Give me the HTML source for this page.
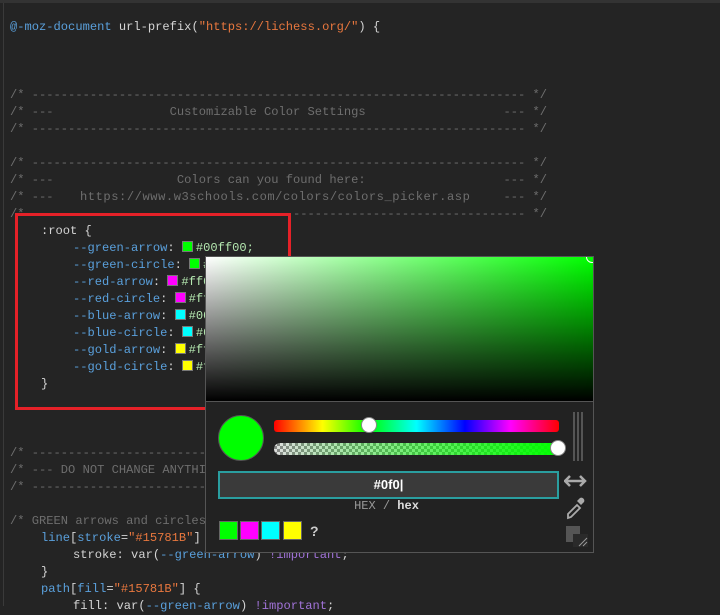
<!DOCTYPE html>
<html><head><style>
body{margin:0;width:720px;height:606px;background:#242424;overflow:hidden;position:relative;font-family:"Liberation Mono",monospace;font-size:12.1px;color:#d4d4d4}
.topb{position:absolute;left:0;top:0;width:720px;height:3px;background:#333}
.gut{position:absolute;left:3px;top:3px;width:1px;height:603px;background:#3a3a3a}
.l{position:absolute;white-space:pre;line-height:17px;height:17px}
.c{color:#6e6e6e}.k{color:#5aa0dc}.s{color:#e8773e}.v{color:#b5e8b0}.p{color:#a173d8}
.sw{display:inline-block;width:9px;height:9px;border:1px solid #777;vertical-align:-1px;margin-right:3px}
.box{position:absolute;left:15px;top:213px;width:270px;height:191px;border:3px solid #e52128}
.pk{position:absolute;left:205px;top:256px;width:387px;height:295px;background:#222;border:1px solid #555}
.grad{position:absolute;left:0;top:0;width:387px;height:144px;overflow:hidden;background:linear-gradient(to top,#000,rgba(0,0,0,0)),linear-gradient(to right,#fff,#0f0);border-bottom:1px solid #555}
</style></head><body>
<div class="topb"></div><div class="gut"></div>
<div class="l" style="left:10px;top:19px"><span class="k">@-moz-document</span> url-prefix(<span class="s">"https://lichess.org/"</span>) {</div>
<div class="l c" style="left:10px;top:87px">/* -------------------------------------------------------------------- */</div>
<div class="l c" style="left:10px;top:104px">/* ---                Customizable Color Settings                   --- */</div>
<div class="l c" style="left:10px;top:121px">/* -------------------------------------------------------------------- */</div>
<div class="l c" style="left:10px;top:155px">/* -------------------------------------------------------------------- */</div>
<div class="l c" style="left:10px;top:172px">/* ---                 Colors can you found here:                   --- */</div>
<div class="l c" style="left:10px;top:189px">/* ---                                                              --- */</div>
<div class="l c" style="left:80px;top:189px;letter-spacing:0.55px">https://www.w3schools.com/colors/colors_picker.asp</div>
<div class="l c" style="left:10px;top:206px">/* -------------------------------------------------------------------- */</div>
<div class="l" style="left:41px;top:223px">:root {</div>
<div class="l" style="left:73px;top:240px"><span class="k">--green-arrow</span>: <span class="sw" style="background:#0f0"></span><span class="v">#00ff00;</span></div>
<div class="l" style="left:73px;top:257px"><span class="k">--green-circle</span>: <span class="sw" style="background:#0f0"></span><span class="v">#00ff00;</span></div>
<div class="l" style="left:73px;top:274px"><span class="k">--red-arrow</span>: <span class="sw" style="background:#f0f"></span><span class="v">#ff00ff;</span></div>
<div class="l" style="left:73px;top:291px"><span class="k">--red-circle</span>: <span class="sw" style="background:#f0f"></span><span class="v">#ff00ff;</span></div>
<div class="l" style="left:73px;top:308px"><span class="k">--blue-arrow</span>: <span class="sw" style="background:#0ff"></span><span class="v">#00ffff;</span></div>
<div class="l" style="left:73px;top:325px"><span class="k">--blue-circle</span>: <span class="sw" style="background:#0ff"></span><span class="v">#00ffff;</span></div>
<div class="l" style="left:73px;top:342px"><span class="k">--gold-arrow</span>: <span class="sw" style="background:#ff0"></span><span class="v">#ffff00;</span></div>
<div class="l" style="left:73px;top:359px"><span class="k">--gold-circle</span>: <span class="sw" style="background:#ff0"></span><span class="v">#ffff00;</span></div>
<div class="l" style="left:41px;top:376px">}</div>
<div class="l c" style="left:10px;top:445px">/* -------------------------------------------------------------------- */</div>
<div class="l c" style="left:10px;top:462px">/* --- DO NOT CHANGE ANYTHING BELOW THIS LINE                       --- */</div>
<div class="l c" style="left:10px;top:479px">/* -------------------------------------------------------------------- */</div>
<div class="l c" style="left:10px;top:513px">/* GREEN arrows and circles */</div>
<div class="l" style="left:41px;top:530px"><span class="k">line</span>[<span class="k">stroke</span>=<span class="s">"#15781B"</span>] {</div>
<div class="l" style="left:73px;top:547px">stroke: var(<span class="k">--green-arrow</span>) <span class="p">!important</span>;</div>
<div class="l" style="left:41px;top:564px">}</div>
<div class="l" style="left:41px;top:581px"><span class="k">path</span>[<span class="k">fill</span>=<span class="s">"#15781B"</span>] {</div>
<div class="l" style="left:73px;top:598px">fill: var(<span class="k">--green-arrow</span>) <span class="p">!important</span>;</div>
<div class="box"></div>
<div class="pk">
 <div class="grad"><div style="position:absolute;left:380px;top:-6px;width:10px;height:10px;border:1px solid #fff;border-radius:50%"></div></div>
 <div style="position:absolute;left:12px;top:158px;width:44px;height:44px;border-radius:50%;background:#0f0;border:1px solid #555"></div>
 <div style="position:absolute;left:68px;top:163px;width:285px;height:12px;border-radius:3px;background:linear-gradient(to right,#f00,#ff0 17%,#0f0 33%,#0ff 50%,#00f 67%,#f0f 83%,#f00)"></div>
 <div style="position:absolute;left:155px;top:160px;width:14px;height:14px;border-radius:50%;background:#fff;border:1px solid #888"></div>
 <div style="position:absolute;left:68px;top:186px;width:285px;height:12px;border-radius:6px;background:linear-gradient(to right,rgba(0,255,0,0),#0f0),repeating-conic-gradient(#888 0 25%,#ddd 0 50%) 0 0/6px 6px"></div>
 <div style="position:absolute;left:344px;top:183px;width:14px;height:14px;border-radius:50%;background:#fff;border:1px solid #888"></div>
 <div style="position:absolute;left:367px;top:155px;width:2px;height:49px;background:#555"></div>
 <div style="position:absolute;left:371px;top:155px;width:2px;height:49px;background:#555"></div>
 <div style="position:absolute;left:375px;top:155px;width:2px;height:49px;background:#555"></div>
 <div style="position:absolute;left:12px;top:214px;width:337px;height:24px;background:#3a3a3a;border:2px solid #2a9ea0;color:#fff;font-family:'Liberation Sans',sans-serif;font-weight:bold;font-size:13px;text-align:center;line-height:24px">#0f0|</div>
 <div style="position:absolute;left:0;width:361px;top:242px;text-align:center;color:#999;font-size:12px">HEX / <b style="color:#ddd">hex</b></div>
 <div style="position:absolute;left:13px;top:264px;width:17px;height:17px;background:#0f0;border:1px solid #666"></div>
 <div style="position:absolute;left:34px;top:264px;width:17px;height:17px;background:#f0f;border:1px solid #666"></div>
 <div style="position:absolute;left:55px;top:264px;width:17px;height:17px;background:#0ff;border:1px solid #666"></div>
 <div style="position:absolute;left:77px;top:264px;width:17px;height:17px;background:#ff0;border:1px solid #666"></div>
 <div style="position:absolute;left:104px;top:266px;color:#ccc;font-weight:bold;font-size:14px;font-family:'Liberation Sans',sans-serif">?</div>
 <svg style="position:absolute;left:358px;top:214px" width="24" height="76" viewBox="0 0 24 76">
  <path d="M2 10h18M6 5l-5 5 5 5M16 5l5 5-5 5" stroke="#aaa" stroke-width="2.5" fill="none"/>
  <path d="M4 43l9-9 3 3-9 9-3 1z" fill="none" stroke="#aaa" stroke-width="1.8"/>
  <path d="M13 30l3-3a3 3 0 0 1 4 4l-3 3z" fill="#aaa"/>
  <rect x="2" y="55" width="14" height="16" fill="#555"/>
  <rect x="9" y="63" width="16" height="14" fill="#2a2a2a"/>
  <path d="M15 75l8-8M19 75l4-4" stroke="#999"/>
 </svg>
</div>
</body></html>
